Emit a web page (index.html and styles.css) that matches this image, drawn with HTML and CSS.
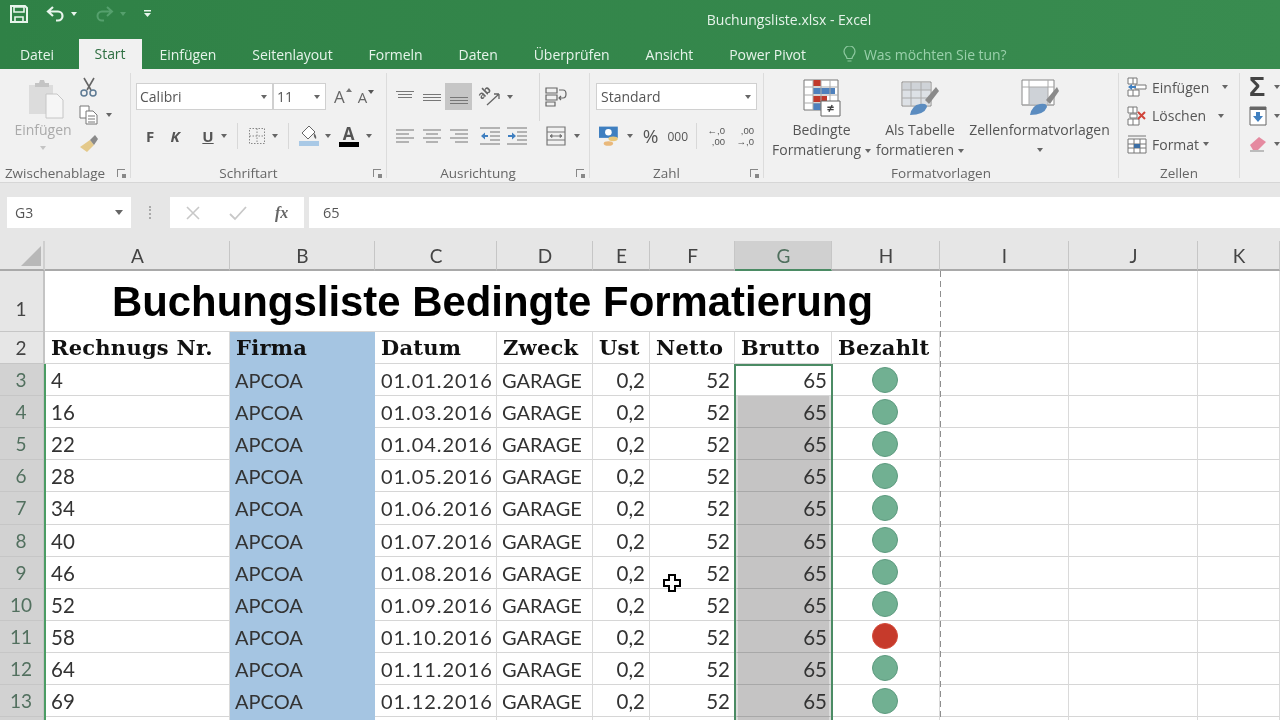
FILE: index.html
```html
<!DOCTYPE html>
<html lang="de">
<head>
<meta charset="utf-8">
<title>Buchungsliste.xlsx - Excel</title>
<link rel="stylesheet" href="styles.css">
</head>
<body>
<div class="app">
  <div class="chrome">
  <header class="titlebar">
    <div class="qat">
      <svg class="q-save" width="20" height="20" viewBox="0 0 20 20"><path d="M2 2h14l2 2v14H2z" fill="none" stroke="#e8f5ec" stroke-width="2"/><path d="M5 3h10v5H5zM6 13h8v5H6z" fill="none" stroke="#e8f5ec" stroke-width="1.6"/></svg>
      <svg class="q-undo" width="20" height="18" viewBox="0 0 20 18"><path d="M7 2 2 6.500 7 11M3 6.500h9a4.500 4.500 0 0 1 0 9h-2" fill="none" stroke="#e8f5ec" stroke-width="2.200"/></svg>
      <i class="caret light"></i>
      <svg class="q-redo" width="20" height="18" viewBox="0 0 20 18"><path d="M13 2l5 4.500-5 4.500M17 6.500H8a4.500 4.500 0 0 0 0 9h2" fill="none" stroke="#55a06d" stroke-width="2"/></svg>
      <i class="caret dim"></i>
      <svg class="q-more" width="10" height="10" viewBox="0 0 10 10"><path d="M1 1h7v1.500H1zM1 4h7L4.500 8z" fill="#e8f5ec"/></svg>
    </div>
    <div class="doc-title">Buchungsliste.xlsx - Excel</div>
  </header>

  <nav class="tabs">
    <span class="tab">Datei</span>
    <span class="tab active">Start</span>
    <span class="tab">Einfügen</span>
    <span class="tab">Seitenlayout</span>
    <span class="tab">Formeln</span>
    <span class="tab">Daten</span>
    <span class="tab">Überprüfen</span>
    <span class="tab">Ansicht</span>
    <span class="tab">Power Pivot</span>
    <span class="tell">
      <svg width="13" height="17" viewBox="0 0 13 17"><path d="M4 12.500C4 10 1 9 1 5.500a5.500 5.500 0 0 1 11 0C12 9 9 10 9 12.500zM4.500 15h4" fill="none" stroke="#8ec9a0" stroke-width="1.200"/></svg>
      Was möchten Sie tun?
    </span>
  </nav>
  </div>

  <section class="ribbon">
    <div class="group g-clip">
      <div class="g-body clip-body">
        <div class="big paste">
          <svg width="36" height="40" viewBox="0 0 36 40"><path d="M1 6h24v29H1z" fill="#dcdcdc"/><path d="M7 4h4l1-3h4l1 3h4v4H7z" fill="#c4c4c4"/><path d="M18 15h11l6 6v18H18z" fill="#f6f6f6" stroke="#c6c6c6"/></svg>
          <span class="dimmed">Einfügen</span>
          <i class="caret dim-g"></i>
        </div>
        <div class="clip-tools">
          <svg width="20" height="20" viewBox="0 0 20 20"><path d="M5 1l7 12M15 1 8 13" stroke="#666" stroke-width="1.600" fill="none"/><circle cx="5" cy="16" r="3" fill="none" stroke="#5d7a93" stroke-width="1.500"/><circle cx="14" cy="16" r="3" fill="none" stroke="#5d7a93" stroke-width="1.500"/></svg>
          <div class="tool-row">
            <svg width="20" height="20" viewBox="0 0 20 20"><path d="M1 1h9v12H1z" fill="#fff" stroke="#777"/><path d="M7 6h7l4 4v9H7z" fill="#fff" stroke="#777"/><path d="M9 11h7M9 14h7M9 17h7" stroke="#777"/></svg>
            <i class="caret"></i>
          </div>
          <svg width="20" height="20" viewBox="0 0 20 20"><path d="M1 14 11 7l4 5-7 7z" fill="#e4c98a"/><path d="M11 7l4 5 4-6-3-4z" fill="#8a8a8a"/></svg>
        </div>
      </div>
      <div class="g-label launchable"><span>Zwischenablage</span><i class="launch"></i></div>
    </div>

    <div class="group g-font">
      <div class="g-body stack">
        <div class="r-row">
          <div class="combo font-name"><span>Calibri</span><i class="caret"></i></div>
          <div class="combo font-size"><span>11</span><i class="caret"></i></div>
          <span class="grow-a">A<i class="tri-up"></i></span>
          <span class="shrink-a">A<i class="tri-down"></i></span>
        </div>
        <div class="r-row fmt-row">
          <b class="fmt f-b">F</b>
          <b class="fmt f-i">K</b>
          <b class="fmt f-u">U</b>
          <i class="caret"></i>
          <span class="vsep"></span>
          <svg width="18" height="18" viewBox="0 0 18 18"><path d="M1.500 1.500h15v15h-15zM9 1.500v15M1.500 9h15" fill="none" stroke="#888" stroke-dasharray="1.500 1.500"/></svg>
          <i class="caret"></i>
          <span class="vsep"></span>
          <svg width="20" height="22" viewBox="0 0 20 22"><path d="M10 1 3 8l6 6 7-7z" fill="#fff" stroke="#666"/><path d="M15 8q3 3 2 6-3-2-2-6" fill="#666"/><path d="M0 16h20v5H0z" fill="#a9c9e6"/></svg>
          <i class="caret"></i>
          <span class="color-a">A</span>
          <i class="caret"></i>
        </div>
      </div>
      <div class="g-label launchable"><span>Schriftart</span><i class="launch"></i></div>
    </div>

    <div class="group g-align">
      <div class="g-body stack">
        <div class="r-row al-row">
          <svg class="al" width="18" height="18" viewBox="0 0 18 18"><path d="M0 3.500h18M2 6.500h14M2 9.500h14" stroke="#777" stroke-width="1.200"/></svg>
          <svg class="al" width="18" height="18" viewBox="0 0 18 18"><path d="M0 6.500h18M0 9.500h18M0 12.500h18" stroke="#777" stroke-width="1.200"/></svg>
          <span class="pressed"><svg width="18" height="18" viewBox="0 0 18 18"><path d="M0 9.500h18M0 12.500h18M0 15.500h18" stroke="#777" stroke-width="1.200"/></svg></span>
          <svg class="orient" width="22" height="20" viewBox="0 0 22 20"><text class="orient-t" transform="translate(3 13) rotate(-45)">ab</text><path d="M8 18 20 7M20 7h-5M20 7v5" fill="none" stroke="#666" stroke-width="1.300"/></svg>
          <i class="caret"></i>
          <span class="vsep"></span>
          <svg width="22" height="20" viewBox="0 0 22 20"><path d="M1 1h11v5H1zM1 8h11v5H1zM1 15h9v4H1zM14 3h4q3 0 3 4t-3 4h-3M16 9l-2 2 2 2" fill="none" stroke="#666" stroke-width="1.200"/></svg>
        </div>
        <div class="r-row al-row2">
          <svg class="al" width="18" height="14" viewBox="0 0 18 14"><path d="M0 1h18M0 5h13M0 9h18M0 13h13" stroke="#777" stroke-width="1.200"/></svg>
          <svg class="al" width="18" height="14" viewBox="0 0 18 14"><path d="M0 1h18M3 5h12M0 9h18M3 13h12" stroke="#777" stroke-width="1.200"/></svg>
          <svg class="al" width="18" height="14" viewBox="0 0 18 14"><path d="M0 1h18M5 5h13M0 9h18M5 13h13" stroke="#777" stroke-width="1.200"/></svg>
          <svg class="ind" width="20" height="18" viewBox="0 0 20 18"><path d="M0 1h20M10 5h10M10 9h10M10 13h10M0 17h20" stroke="#777" stroke-width="1.100"/><path d="M1 9l4-3.500v2.500h3v2H5v2.500z" fill="#3f7fc0"/></svg>
          <svg class="ind" width="20" height="18" viewBox="0 0 20 18"><path d="M0 1h20M10 5h10M10 9h10M10 13h10M0 17h20" stroke="#777" stroke-width="1.100"/><path d="M9 9 5 5.500v2.500H1v2h4v2.500z" fill="#3f7fc0"/></svg>
          <span class="vsep"></span>
          <svg width="20" height="20" viewBox="0 0 20 20"><path d="M1 1h18v18H1zM1 6h18M1 14h18" fill="none" stroke="#777" stroke-width="1.200"/><path d="M4 10h12M4 10l2-1.500v3zM16 10l-2-1.500v3z" stroke="#777" fill="#777"/></svg>
          <i class="caret"></i>
        </div>
      </div>
      <div class="g-label launchable"><span>Ausrichtung</span><i class="launch"></i></div>
    </div>

    <div class="group g-num">
      <div class="g-body stack">
        <div class="r-row"><div class="combo num-fmt"><span>Standard</span><i class="caret"></i></div></div>
        <div class="r-row num-row">
          <svg width="22" height="22" viewBox="0 0 22 22"><path d="M0 1h20v12H0z" fill="#3f7fc0"/><circle cx="10" cy="7" r="3.500" fill="#fff"/><ellipse cx="15" cy="14" rx="5" ry="2.500" fill="#e9c77a"/><ellipse cx="10" cy="19" rx="5" ry="2.500" fill="#e9b87a"/></svg>
          <i class="caret"></i>
          <span class="pct">%</span>
          <span class="thou">000</span>
          <span class="vsep"></span>
          <span class="dec">←,0<br>,00</span>
          <span class="dec">,00<br>→,0</span>
        </div>
      </div>
      <div class="g-label launchable"><span>Zahl</span><i class="launch"></i></div>
    </div>

    <div class="group g-styles">
      <div class="g-body style-body">
        <div class="big style-btn s1">
          <svg width="38" height="38" viewBox="0 0 38 38"><path d="M1 1h34v30H1z" fill="#fff" stroke="#777"/><path d="M10 1h8v6h-8z" fill="#c0392b"/><path d="M10 9h22v6H10z" fill="#4f81bd"/><path d="M10 17h14v6H10z" fill="#c0392b"/><path d="M10 24h8v7h-8z" fill="#4f81bd"/><path d="M1 8h34M1 16h34M1 24h34M10 1v30M18 1v30M27 1v30" stroke="#aaa" fill="none"/><path d="M18 22h19v15H18z" fill="#fff" stroke="#666"/><text x="27.500" y="34" text-anchor="middle" class="neq">≠</text></svg>
          <span>Bedingte</span>
          <span>Formatierung<i class="caret in"></i></span>
        </div>
        <div class="big style-btn s2">
          <svg width="38" height="38" viewBox="0 0 38 38"><path d="M1 3h29v24H1z" fill="#fff" stroke="#888"/><path d="M2 4h27v7H2z" fill="#cfd3d8"/><path d="M2 11h27v15H2z" fill="#dde1e6"/><path d="M1 11h29M1 19h29M10 3v24M20 3v24" stroke="#aaa" fill="none"/><path d="M35 8 24 21l4 4L38 12z" fill="#8a8a8a"/><path d="M9 36q2-10 10-11 7-1 7 3-3 8-17 8z" fill="#5b8cc0"/></svg>
          <span>Als Tabelle</span>
          <span>formatieren<i class="caret in"></i></span>
        </div>
        <div class="big style-btn s3">
          <svg width="38" height="38" viewBox="0 0 38 38"><path d="M1 1h32v25H1z" fill="#fff" stroke="#888"/><path d="M8 8h19v18H8z" fill="#ced2d7"/><path d="M1 8h32M8 1v25M27 1v25M1 26h32" stroke="#aaa" fill="none"/><path d="M36 8 25 21l4 4L38 12z" fill="#8a8a8a"/><path d="M9 36q2-10 10-11 7-1 7 3-3 8-17 8z" fill="#5b8cc0"/></svg>
          <span>Zellenformatvorlagen</span>
          <i class="caret lone"></i>
        </div>
      </div>
      <div class="g-label"><span>Formatvorlagen</span></div>
    </div>

    <div class="group g-cells">
      <div class="g-body cell-body">
        <div class="cell-cmd"><svg width="20" height="20" viewBox="0 0 20 20"><path d="M1 1h9v6H1zM1 13h11v6H1zM6 1v6M6 13v6M8 8h11v4H8z" fill="#fff" stroke="#777"/><path d="M1 10l4-3v2h4v2H5v2z" fill="#3f7fc0"/></svg><span>Einfügen</span><i class="caret c1"></i></div>
        <div class="cell-cmd"><svg width="20" height="20" viewBox="0 0 20 20"><path d="M1 1h9v6H1zM1 13h11v6H1zM6 1v6M6 13v6M3 8h7v4H3z" fill="#fff" stroke="#777"/><path d="M11 6l7 7M18 6l-7 7" stroke="#d0453a" stroke-width="2"/></svg><span>Löschen</span><i class="caret c2"></i></div>
        <div class="cell-cmd"><svg width="20" height="20" viewBox="0 0 20 20"><path d="M1 5h18v14H1zM1 10h18M1 14h18M7 5v14M13 5v14M1 2h18" fill="#fff" stroke="#777"/><path d="M7 10h6v4H7z" fill="#3d6fa5"/></svg><span>Format</span><i class="caret c3"></i></div>
      </div>
      <div class="g-label"><span>Zellen</span></div>
    </div>

    <div class="group g-edit">
      <div class="g-body edit-body">
        <div class="edit-row"><span class="sigma">Σ</span><i class="caret"></i></div>
        <div class="edit-row"><svg width="18" height="20" viewBox="0 0 18 20"><path d="M1 1h16v18H1z" fill="#fff" stroke="#666"/><path d="M1 1h16v3H1z" fill="#666"/><path d="M9 16 4 10h3V6h4v4h3z" fill="#3f7fc0"/></svg><i class="caret"></i></div>
        <div class="edit-row"><svg width="18" height="18" viewBox="0 0 18 18"><path d="M1 10 10 2l7 5-8 8H4z" fill="#e58aa0"/><path d="M1 16h14" stroke="#aaa" stroke-width="1.500"/></svg><i class="caret"></i></div>
      </div>
    </div>
  </section>

  <div class="formula-bar">
    <div class="name-box"><span>G3</span><i class="caret big-caret"></i></div>
    <div class="grip"></div>
    <div class="fx-box">
      <svg width="16" height="16" viewBox="0 0 16 16"><path d="M2 2l12 12M14 2 2 14" stroke="#c8c8c8" stroke-width="1.600"/></svg>
      <svg width="18" height="16" viewBox="0 0 18 16"><path d="M1 9l5 5L17 2" stroke="#c8c8c8" stroke-width="1.800" fill="none"/></svg>
      <span class="fx">fx</span>
    </div>
    <div class="fx-input">65</div>
  </div>

  <main class="sheet">
    <div class="corner"><i></i></div>
    <div class="ch">A</div><div class="ch">B</div><div class="ch">C</div><div class="ch">D</div><div class="ch">E</div><div class="ch">F</div><div class="ch sel">G</div><div class="ch">H</div><div class="ch">I</div><div class="ch">J</div><div class="ch">K</div>

    <div class="rh r1">1</div>
    <div class="title-cell">Buchungsliste Bedingte Formatierung</div>
    <div class="c"></div><div class="c"></div><div class="c"></div>

    <div class="rh">2</div>
    <div class="c hd">Rechnugs Nr.</div><div class="c hd blue">Firma</div><div class="c hd">Datum</div><div class="c hd">Zweck</div><div class="c hd">Ust</div><div class="c hd">Netto</div><div class="c hd">Brutto</div><div class="c hd">Bezahlt</div><div class="c"></div><div class="c"></div><div class="c"></div>

    <div class="rh on">3</div>
    <div class="c">4</div><div class="c tx blue">APCOA</div><div class="c dt">01.01.2016</div><div class="c tx">GARAGE</div><div class="c num">0,2</div><div class="c num">52</div><div class="c num">65</div><div class="c dotc"><i class="dot"></i></div><div class="c"></div><div class="c"></div><div class="c"></div>

    <div class="rh on">4</div>
    <div class="c">16</div><div class="c tx blue">APCOA</div><div class="c dt">01.03.2016</div><div class="c tx">GARAGE</div><div class="c num">0,2</div><div class="c num">52</div><div class="c num gray">65</div><div class="c dotc"><i class="dot"></i></div><div class="c"></div><div class="c"></div><div class="c"></div>

    <div class="rh on">5</div>
    <div class="c">22</div><div class="c tx blue">APCOA</div><div class="c dt">01.04.2016</div><div class="c tx">GARAGE</div><div class="c num">0,2</div><div class="c num">52</div><div class="c num gray">65</div><div class="c dotc"><i class="dot"></i></div><div class="c"></div><div class="c"></div><div class="c"></div>

    <div class="rh on">6</div>
    <div class="c">28</div><div class="c tx blue">APCOA</div><div class="c dt">01.05.2016</div><div class="c tx">GARAGE</div><div class="c num">0,2</div><div class="c num">52</div><div class="c num gray">65</div><div class="c dotc"><i class="dot"></i></div><div class="c"></div><div class="c"></div><div class="c"></div>

    <div class="rh on">7</div>
    <div class="c">34</div><div class="c tx blue">APCOA</div><div class="c dt">01.06.2016</div><div class="c tx">GARAGE</div><div class="c num">0,2</div><div class="c num">52</div><div class="c num gray">65</div><div class="c dotc"><i class="dot"></i></div><div class="c"></div><div class="c"></div><div class="c"></div>

    <div class="rh on">8</div>
    <div class="c">40</div><div class="c tx blue">APCOA</div><div class="c dt">01.07.2016</div><div class="c tx">GARAGE</div><div class="c num">0,2</div><div class="c num">52</div><div class="c num gray">65</div><div class="c dotc"><i class="dot"></i></div><div class="c"></div><div class="c"></div><div class="c"></div>

    <div class="rh on">9</div>
    <div class="c">46</div><div class="c tx blue">APCOA</div><div class="c dt">01.08.2016</div><div class="c tx">GARAGE</div><div class="c num">0,2</div><div class="c num">52</div><div class="c num gray">65</div><div class="c dotc"><i class="dot"></i></div><div class="c"></div><div class="c"></div><div class="c"></div>

    <div class="rh on">10</div>
    <div class="c">52</div><div class="c tx blue">APCOA</div><div class="c dt">01.09.2016</div><div class="c tx">GARAGE</div><div class="c num">0,2</div><div class="c num">52</div><div class="c num gray">65</div><div class="c dotc"><i class="dot"></i></div><div class="c"></div><div class="c"></div><div class="c"></div>

    <div class="rh on">11</div>
    <div class="c">58</div><div class="c tx blue">APCOA</div><div class="c dt">01.10.2016</div><div class="c tx">GARAGE</div><div class="c num">0,2</div><div class="c num">52</div><div class="c num gray">65</div><div class="c dotc"><i class="dot red"></i></div><div class="c"></div><div class="c"></div><div class="c"></div>

    <div class="rh on">12</div>
    <div class="c">64</div><div class="c tx blue">APCOA</div><div class="c dt">01.11.2016</div><div class="c tx">GARAGE</div><div class="c num">0,2</div><div class="c num">52</div><div class="c num gray">65</div><div class="c dotc"><i class="dot"></i></div><div class="c"></div><div class="c"></div><div class="c"></div>

    <div class="rh on">13</div>
    <div class="c">69</div><div class="c tx blue">APCOA</div><div class="c dt">01.12.2016</div><div class="c tx">GARAGE</div><div class="c num">0,2</div><div class="c num">52</div><div class="c num gray">65</div><div class="c dotc"><i class="dot"></i></div><div class="c"></div><div class="c"></div><div class="c"></div>

    <div class="rh on"></div>
    <div class="c"></div><div class="c blue"></div><div class="c"></div><div class="c"></div><div class="c"></div><div class="c"></div><div class="c gray"></div><div class="c"></div><div class="c"></div><div class="c"></div><div class="c"></div>

    <div class="page-break"></div>
    <div class="selection"></div>
    <div class="row-edge"></div>
    <svg class="cursor" width="20" height="20" viewBox="0 0 20 20"><path d="M7 2h6v5h5v6h-5v5H7v-5H2V7h5z" fill="#fff" stroke="#000" stroke-width="2"/></svg>
  </main>
</div>
</body>
</html>
```

FILE: styles.css
```css
* { box-sizing: border-box; }
html, body { margin: 0; padding: 0; height: 100%; }
body { overflow: hidden; background: #fff; font-family: "Open Sans", "Liberation Sans", sans-serif; color: #444; }
.app { width: 1280px; height: 720px; display: flex; flex-direction: column; overflow: hidden; position: relative; filter: blur(0.3px); }

.caret { display: inline-block; width: 0; height: 0; border-left: 3.5px solid transparent; border-right: 3.5px solid transparent; border-top: 4px solid #666; flex: none; }
.caret.light { border-top-color: #e8f5ec; margin-left: 5px; }
.caret.dim { border-top-color: #55a06d; margin-left: 6px; }
.caret.dim-g { border-top-color: #c4c4c4; margin-top: 6px; }
.caret.in { margin-left: 4px; vertical-align: middle; }

.chrome { background: linear-gradient(90deg, #2f8146, #398c50); flex: none; }
.titlebar { height: 40px; display: flex; align-items: center; position: relative; }
.qat { display: flex; align-items: center; padding-left: 9px; height: 26px; margin-top: -12px; }
.q-undo { margin-left: 17px; }
.q-redo { margin-left: 17px; }
.q-more { margin-left: 17px; }
.doc-title { position: absolute; left: 298px; right: 0; top: 10px; text-align: center; color: #e6f3ea; font-size: 14px; line-height: 20px; }

.tabs { height: 29px; display: flex; align-items: flex-end; padding-left: 2px; color: #e6f3ea; font-size: 14px; letter-spacing: -0.05px; }
.tab { padding: 0 18px; height: 29px; line-height: 29px; white-space: nowrap; }
.tab.active { background: #f1f1f1; color: #2f6f42; padding: 0 16px; height: 30px; line-height: 30px; margin-left: 6.500px; }
.tell { display: flex; align-items: center; gap: 8px; margin-left: 19px; height: 29px; color: #9ad0ab; }

.ribbon { height: 114px; flex: none; background: #f1f1f1; border-bottom: 1px solid #d6d6d6; display: flex; padding-top: 4px; font-size: 14px; color: #555; }
.group { display: flex; flex-direction: column; border-right: 1px solid #dcdcdc; height: 105px; flex: none; }
.g-body { flex: 1; display: flex; min-height: 0; }
.g-label { height: 22px; line-height: 22px; margin-bottom: -6px; font-size: 13.5px; color: #666; text-align: center; position: relative; white-space: nowrap; flex: none; }
.g-label.launchable { padding-right: 20px; }
.launch { position: absolute; right: 5px; top: 7px; width: 8px; height: 8px; border-left: 1px solid #888; border-top: 1px solid #888; }
.launch::after { content: ""; position: absolute; right: -1px; bottom: -1px; width: 4px; height: 4px; background: #888; }

.g-clip { width: 131px; }
.clip-body { padding-left: 14px; }
.big { display: flex; flex-direction: column; align-items: center; }
.paste { width: 58px; padding-top: 6px; gap: 1px; }
.paste svg { margin-left: 6px; }
.dimmed { color: #aaa; }
.clip-tools { display: flex; flex-direction: column; align-items: flex-start; gap: 8px; margin-left: 7px; padding-top: 4px; }
.tool-row { display: flex; align-items: center; gap: 7px; }

.stack { flex-direction: column; }
.r-row { display: flex; align-items: center; }
.g-font { width: 256px; }
.g-font .g-body { padding: 10px 0 0 5px; }
.combo { height: 27px; background: #fff; border: 1px solid #d0d0d0; display: flex; align-items: center; justify-content: space-between; font-size: 14px; color: #555; padding: 0 5px 0 3px; }
.font-name { width: 137px; }
.font-size { width: 53px; }
.grow-a, .shrink-a { position: relative; color: #666; }
.grow-a { margin-left: 8px; font-size: 17px; }
.shrink-a { margin-left: 13px; font-size: 15px; }
.tri-up, .tri-down { position: absolute; right: -7px; top: 3px; border-left: 3px solid transparent; border-right: 3px solid transparent; }
.tri-up { border-bottom: 4px solid #777; }
.tri-down { border-top: 4px solid #555; }
.fmt-row { margin-top: 14px; height: 24px; padding-left: 6px; }
.fmt { font-size: 15px; color: #555; font-weight: 700; width: 16px; text-align: center; flex: none; }
.f-i { margin-left: 9px; font-style: italic; }
.f-u { margin-left: 17px; text-decoration: underline; }
.fmt + .caret { margin-left: 4.5px; }
.vsep { width: 1px; height: 26px; background: #d8d8d8; margin: 0 10px; flex: none; }
.fmt-row svg + .caret { margin-left: 6px; margin-right: 8px; }
.fmt-row svg + .caret + .vsep { margin-left: 2px; }
.color-a { width: 20px; height: 22px; flex: none; text-align: center; font-size: 17px; font-weight: 700; line-height: 17px; color: #555; border-bottom: 5px solid #000; }
.color-a + .caret { margin-left: 7px; }

.g-align { width: 203px; }
.g-align .g-body { padding: 10px 0 0 9px; }
.al-row { height: 27px; }
.al { margin-right: 9px; flex: none; }
.pressed { width: 27px; height: 27px; background: #c6c6c6; display: flex; align-items: center; justify-content: center; margin-left: -5px; }
.orient { margin-left: 7px; flex: none; overflow: visible; }
.orient-t { font: 700 11px "Open Sans", sans-serif; fill: #666; }
.al-row .caret { margin-left: 6px; }
.al-row .vsep { margin: 0 5px 0 26px; height: 48px; }
.al-row2 { margin-top: 14px; height: 24px; }
.ind { margin-right: 7px; flex: none; }
.al-row2 .al:nth-child(3) { margin-right: 12px; }
.al-row2 .vsep { margin: 0 5px 0 7px; width: 0; }
.al-row2 .caret { margin-left: 8px; }

.g-num { width: 174px; }
.g-num .g-body { padding: 10px 0 0 6px; }
.num-fmt { width: 161px; padding: 0 5px 0 4px; }
.num-row { margin-top: 14px; height: 24px; padding-left: 3px; }
.num-row .caret { margin-left: 7px; }
.pct { font-size: 19px; color: #555; margin-left: 10px; line-height: 24px; }
.thou { font-size: 12px; color: #555; margin-left: 9px; }
.num-row .vsep { margin: 0 8px 0 8px; }
.dec { display: block; font: 9.500px/11px "Liberation Sans", sans-serif; text-align: right; color: #555; width: 20px; margin-right: 9px; white-space: nowrap; flex: none; }

.g-styles { width: 355px; }
.style-body { padding-left: 0; }
.style-btn { line-height: 20px; white-space: nowrap; flex: none; padding-top: 6px; }
.style-btn svg { margin-bottom: 3px; }
.s1 { width: 115px; }
.s2 { width: 82px; }
.s3 { width: 141px; margin-left: 8px; }
.neq { font: 700 13px "Open Sans", sans-serif; fill: #444; }
.lone { margin-top: 8px; }

.g-cells { width: 121px; }
.cell-body { flex-direction: column; padding: 4px 0 0 8px; gap: 8.500px; }
.cell-cmd { display: flex; align-items: center; height: 20px; gap: 5px; }
.cell-cmd .c1 { margin-left: 8px; }
.cell-cmd .c2 { margin-left: 7px; }
.cell-cmd .c3 { margin-left: -1px; }

.g-edit { border-right: none; width: 40px; }
.edit-body { flex-direction: column; padding: 4px 0 0 9px; gap: 8.500px; }
.edit-row { display: flex; align-items: center; height: 20px; gap: 7px; }
.sigma { font: 700 27px/20px "Liberation Sans", sans-serif; color: #444; width: 18px; }

.formula-bar { height: 58px; flex: none; background: #e6e6e6; display: flex; align-items: flex-start; padding: 14px 0 0 7px; font-size: 14px; }
.name-box { width: 124px; height: 31px; background: #fff; display: flex; align-items: center; justify-content: space-between; padding: 0 8px; color: #555; }
.caret.big-caret { border-left-width: 4.500px; border-right-width: 4.500px; border-top-width: 5px; }
.grip { width: 3px; height: 13px; margin: 9px 18px 0 18px; border-left: 2px dotted #aaa; }
.fx-box { width: 134px; height: 31px; background: #fff; display: flex; align-items: center; gap: 28px; padding-left: 15px; }
.fx { font: italic 700 16px "Liberation Serif", serif; color: #666; }
.fx-input { flex: 1; height: 31px; background: #fff; margin-left: 5px; line-height: 31px; padding-left: 14px; color: #555; font-size: 14.500px; }

.sheet { position: relative; flex: 1; display: grid; background: #fff; overflow: hidden; font-family: Lato, "Open Sans", sans-serif; grid-template-columns: 45px 185px 145px 122px 96px 57px 85px 97px 108px 129px 129px 82px; grid-template-rows: 30px 61px repeat(13, 32.1px); }
.corner { background: #e6e6e6; border-bottom: 2px solid #a9a9a9; border-right: 2px solid #cfcfcf; position: relative; }
.corner i { position: absolute; right: 2px; bottom: 3px; width: 0; height: 0; border-left: 20px solid transparent; border-bottom: 20px solid #b8b8b8; }
.ch { background: #e6e6e6; border-right: 1px solid #c6c6c6; border-bottom: 2px solid #a9a9a9; text-align: center; font-size: 19px; line-height: 29px; color: #444; padding-left: 1px; }
.ch.sel { background: #d0d0d0; border-bottom-color: #4b8b64; color: #4f6f5d; }
.rh { background: #e6e6e6; border-right: 2px solid #c4c4c4; border-bottom: 1px solid #c6c6c6; text-align: center; font-size: 19px; line-height: 32px; color: #444; padding-right: 1px; }
.rh.r1 { line-height: 76px; }
.rh.on { background: #d2d2d2; color: #52705f; }
.title-cell { grid-column: span 8; border-bottom: 1px solid #d6d6d6; text-align: center; font: 700 41.900px/62px "Liberation Sans", sans-serif; color: #000; white-space: nowrap; overflow: hidden; }
.c { border-right: 1px solid #dadada; border-bottom: 1px solid #d6d6d6; font-size: 20.500px; line-height: 32px; padding: 0 4px 0 6px; color: #333; white-space: nowrap; overflow: hidden; min-width: 0; }
.tx { font-size: 20px; padding-left: 5px; }
.dt { font-size: 20px; letter-spacing: 0.95px; }
.hd { font: 700 21px/32px "DejaVu Serif", serif; color: #111; letter-spacing: 0.250px; }
.blue { background: #a5c5e2; border-color: #a5c5e2; }
.num { text-align: right; }
.gray { background: #c5c4c4; border-bottom-color: #a8a8a8; border-left: 3px solid #dcdcdc; border-right: 3px solid #dcdcdc; padding-right: 2px; }
.dotc { display: flex; align-items: center; justify-content: center; padding: 0 1px 0 0; }
.dot { width: 26px; height: 26px; border-radius: 50%; background: #71b092; border: 1px solid #5c9a7e; display: block; }
.dot.red { background: #c63a2b; border-color: #d44a3a; }

.page-break { position: absolute; left: 940px; top: 30px; bottom: 0; width: 1px; background: repeating-linear-gradient(180deg, #8f8f8f 0 6px, transparent 6px 10px); }
.selection { position: absolute; left: 734px; top: 123px; width: 99px; bottom: -4px; border: 2px solid #4b8b64; }
.row-edge { position: absolute; left: 44px; top: 123px; bottom: 0; width: 2px; background: #4b9c64; }
.cursor { position: absolute; left: 662px; top: 332px; }
```
